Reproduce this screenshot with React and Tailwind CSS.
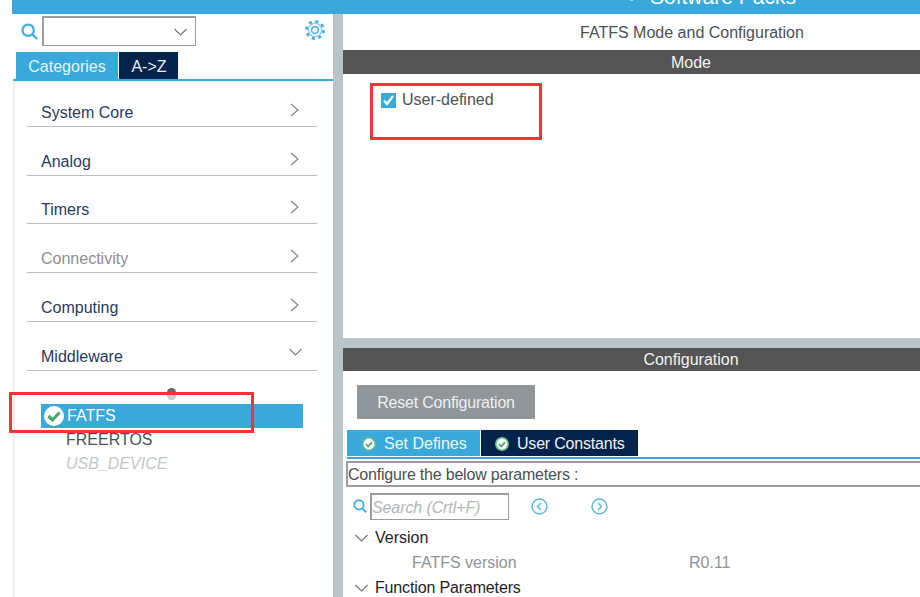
import React from "react";

const font = "font-['Liberation_Sans',Arial,sans-serif]";

const Chevron = ({ open }) =>
    open ? (
        <svg width="13" height="8" viewBox="0 0 13 8" fill="none" stroke="#7d8285" strokeWidth="1.1">
            <path d="M0.5 1l6 6 6-6" />
        </svg>
    ) : (
        <svg width="9" height="14" viewBox="0 0 9 14" fill="none" stroke="#7d8285" strokeWidth="1.1">
            <path d="M1 1l7 6-7 6" />
        </svg>
    );

const SmallDown = () => (
    <svg width="13" height="8" viewBox="0 0 13 8" fill="none" stroke="#777" strokeWidth="1.2">
        <path d="M0.5 1l6 6 6-6" />
    </svg>
);

const SearchIcon = ({ size = 18 }) => (
    <svg width={size} height={size} viewBox="0 0 18 18" fill="none" stroke="#45aee0" strokeWidth="2.4">
        <circle cx="7.6" cy="7.6" r="6" />
        <path d="M12 12l5 5" />
    </svg>
);

const Gear = () => (
    <svg width="20" height="20" viewBox="0 0 20 20" fill="none" stroke="#4fb2e2">
        <circle cx="10" cy="10" r="8.4" strokeWidth="3" strokeDasharray="3.2 3.4" />
        <circle cx="10" cy="10" r="6.6" strokeWidth="1.4" stroke="#8fcdec" />
        <circle cx="10" cy="10" r="3.4" strokeWidth="1.6" />
    </svg>
);

const BigCheck = () => (
    <svg width="20" height="20" viewBox="0 0 20 20" fill="none">
        <circle cx="10" cy="10" r="10" fill="#fff" />
        <path d="M4.5 10l4 4 7-7.5" stroke="#46ad6e" strokeWidth="3.2" />
    </svg>
);

const TabCheck = () => (
    <svg width="14" height="14" viewBox="0 0 14 14" fill="none">
        <circle cx="7" cy="7" r="6.2" fill="#fff" stroke="#68bd8c" strokeWidth="1.6" />
        <path d="M3.8 7l2.3 2.4 4-4.2" stroke="#4bae72" strokeWidth="1.8" />
    </svg>
);

const NavCircle = ({ d }) => (
    <svg width="17" height="17" viewBox="0 0 17 17" fill="none" stroke="#5cb8e4">
        <circle cx="8.5" cy="8.5" r="7.4" strokeWidth="1.5" />
        <path d={d} strokeWidth="1.5" />
    </svg>
);

const categories = [
    { name: "System Core" },
    { name: "Analog" },
    { name: "Timers" },
    { name: "Connectivity", muted: true },
    { name: "Computing" },
    { name: "Middleware", open: true },
];

const Sidebar = () => (
    <div className="w-[321px] shrink-0 flex flex-col bg-white relative">
        <div className="h-[38px] flex items-center pl-[9px] pr-[8px] pb-[4px]">
            <SearchIcon size={17} />
            <div className="ml-[4px] w-[154px] h-[30px] border-2 border-[#9a9ea1] border-r border-b flex items-center justify-end pr-[8px]">
                <SmallDown />
            </div>
            <div className="ml-auto -mt-[2px]"><Gear /></div>
        </div>
        <div className="flex pl-[4px] h-[27px] gap-[1px]">
            <div className="w-[102px] bg-[#39a9dc] text-[#e8f5fb] text-[16px] flex items-center justify-center pt-[2px]">Categories</div>
            <div className="w-[59px] bg-[#03234b] text-[#e8eef5] text-[16px] flex items-center justify-center pt-[2px] pl-[1px]">A-&gt;Z</div>
        </div>
        <div className="h-[2px] bg-[#39a9dc] ml-[1px]" />
        <div className="flex-1 ml-[1px] mr-[1px] border-l-2 border-t border-[#f0f0f0]">
            <div className="pl-[12px] pr-[15px] -mt-[4px] flex flex-col">
                {categories.map((c) => (
                    <div key={c.name} className="h-[48.75px] border-b border-[#b4bfc6] flex items-end justify-between pb-[4px]">
                        <span className={`ml-[14px] text-[16px] leading-[18px] ${c.muted ? "text-[#8b8f92]" : "text-[#2a3a5e]"}`}>{c.name}</span>
                        <span className={c.open ? "mr-[15px] mb-[10px]" : "mr-[18px] mb-[5px]"}><Chevron open={c.open} /></span>
                    </div>
                ))}
            </div>
            <div className="h-[33px] flex justify-center items-center pr-[4px] pt-[12px]">
                <div className="w-[9px] h-[12px] rounded-full bg-[linear-gradient(#66696b_60%,#c9cbcc_60%)] mt-[1px]" />
            </div>
            <div className="ml-[26px] mr-[29px] flex flex-col text-[16px] leading-[24px]">
                <div className="h-[24px] bg-[#39a9dc] text-white flex items-center">
                    <span className="w-[26px] flex justify-center pr-[1px]"><BigCheck /></span>
                    <span className="pt-[1px]">FATFS</span>
                </div>
                <div className="pl-[25px] text-[#4c5158]">FREERTOS</div>
                <div className="pl-[25px] text-[#c3c7cb] italic">USB_DEVICE</div>
            </div>
        </div>
    </div>
);

// the pane runs past the window's right edge, so its titles centre further right
const Main = () => (
    <div className="flex-1 min-w-0 overflow-hidden">
        <div className="w-[696px] h-full flex flex-col">
            <div className="h-[324px] shrink-0 flex flex-col bg-white">
                <div className="h-[36px] flex items-center justify-center pt-[1px] pl-[2px] text-[16px] text-[#4c5055]">FATFS Mode and Configuration</div>
                <div className="h-[24px] bg-[#535453] text-[#f4f4f4] text-[16px] flex items-center justify-center pt-[1px]">Mode</div>
                <div className="pl-[38px] pt-[16px] flex items-center gap-[6px] text-[16px] leading-[20px] text-[#4c5158]">
                    <span className="w-[15px] h-[15px] bg-[#39a9dc] flex items-center justify-center mt-[1px]">
                        <svg width="11" height="11" viewBox="0 0 11 11" fill="none" stroke="#fff" strokeWidth="2.2">
                            <path d="M1 5.5l3 3.5 6-8" />
                        </svg>
                    </span>
                    <span>User-defined</span>
                </div>
            </div>
            <div className="h-[10px] shrink-0 bg-[#b9c4ca]" />
            <div className="flex-1 bg-white flex flex-col overflow-hidden">
                <div className="h-[23px] shrink-0 bg-[#535453] text-[#f4f4f4] text-[16px] flex items-center justify-center">Configuration</div>
                <div className="mt-[14px] ml-[14px] w-[178px] h-[34px] shrink-0 bg-[#91969a] text-[#eef0f1] text-[16px] tracking-[-0.2px] flex items-center justify-center pt-[1px]">Reset Configuration</div>
                <div className="mt-[11px] ml-[4px] h-[26px] shrink-0 flex gap-[1px]">
                    <div className="w-[133px] bg-[#39a9dc] text-[#eef8fc] text-[16px] flex items-center pl-[15px] gap-[8px] pt-[1px]">
                        <TabCheck />
                        <span>Set Defines</span>
                    </div>
                    <div className="w-[157px] bg-[#03234b] text-[#eef2f6] text-[16px] tracking-[-0.2px] flex items-center pl-[14px] gap-[8px] pt-[1px]">
                        <TabCheck />
                        <span>User Constants</span>
                    </div>
                </div>
                <div className="h-[1px] shrink-0 bg-white" />
                <div className="h-[2px] shrink-0 ml-[4px] bg-[#39a9dc]" />
                <div className="mt-[2px] ml-[3px] h-[26px] shrink-0 border-2 border-r-0 border-[#9a9ea1] flex items-center text-[16px] tracking-[-0.2px] text-[#4c4f52] whitespace-nowrap pt-[1px]">Configure the below parameters :</div>
                <div className="mt-[5px] ml-[10px] h-[28px] shrink-0 flex items-center">
                    <SearchIcon size={14} />
                    <div className="ml-[3px] w-[139px] h-[27px] border-2 border-[#9a9ea1] border-r border-b flex items-center pt-[2px] text-[16px] tracking-[-0.1px] italic text-[#b3b6b8]">Search (Crtl+F)</div>
                    <div className="ml-[22px]"><NavCircle d="M10 5l-3.5 3.5L10 12" /></div>
                    <div className="ml-[43px]"><NavCircle d="M7 5l3.5 3.5L7 12" /></div>
                </div>
                <div className="mt-[5px] flex flex-col text-[16px] leading-[25px] text-[#1e1e1e]">
                    <div className="flex items-center h-[25px] pl-[12px]">
                        <SmallDown />
                        <span className="ml-[7px]">Version</span>
                    </div>
                    <div className="flex items-center h-[25px] text-[#8f9498]">
                        <span className="ml-[69px] w-[277px]">FATFS version</span>
                        <span>R0.11</span>
                    </div>
                    <div className="flex items-center h-[25px] pl-[12px]">
                        <SmallDown />
                        <span className="ml-[7px] tracking-[-0.15px]">Function Parameters</span>
                    </div>
                </div>
            </div>
        </div>
    </div>
);

export default function App() {
    return (
        <div className={`w-[920px] h-[597px] overflow-hidden bg-white pl-[12px] relative flex flex-col ${font}`}>
            <div className="h-[14px] shrink-0 bg-[#39a9dc] overflow-hidden relative">
                <div className="absolute left-[618px] top-0 w-[3px] h-[1px] bg-[#a9d9f0]" />
                <div className="absolute left-[638px] top-[-15px] text-white text-[21px] leading-[24px] whitespace-nowrap">Software Packs</div>
            </div>
            <div className="flex-1 min-h-0 flex">
                <Sidebar />
                <div className="w-[10px] shrink-0 bg-[#b9c4ca]" />
                <Main />
            </div>
            {/* red annotation boxes */}
            <div className="absolute left-[370px] top-[83px] w-[172px] h-[57px] border-[3px] border-[#fb3235]" />
            <div className="absolute left-[9px] top-[392px] w-[245px] h-[41px] border-[3px] border-[#fb3235]" />
        </div>
    );
}
